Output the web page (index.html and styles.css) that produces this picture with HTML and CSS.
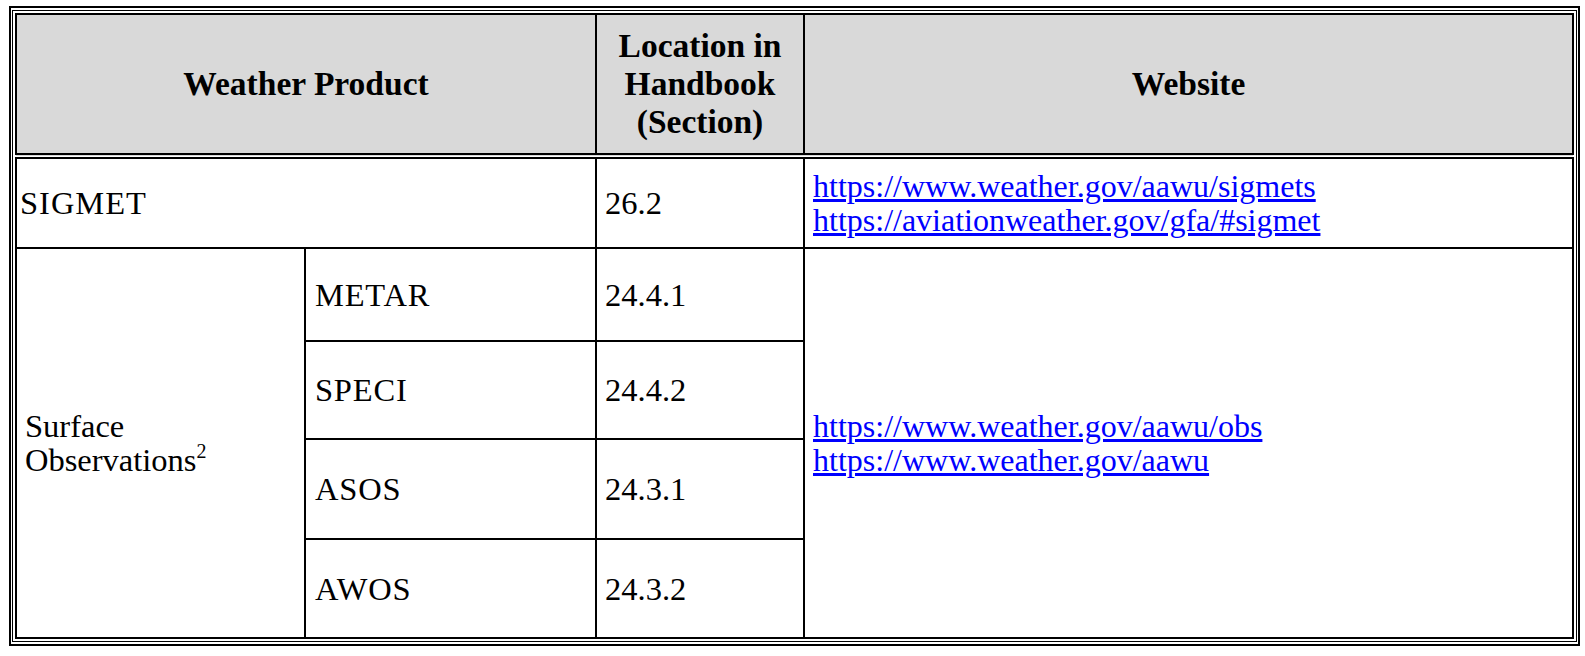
FILE: index.html
```html
<!DOCTYPE html>
<html>
<head>
<meta charset="utf-8">
<link rel="stylesheet" href="styles.css">
</head>
<body>
<div class="frame-outer">
  <div class="frame-inner">
    <table class="wx">
      <colgroup>
        <col class="c1"><col class="c2"><col class="c3"><col class="c4">
      </colgroup>
      <thead>
        <tr class="head-row">
          <th colspan="2">Weather Product</th>
          <th class="hd-loc">Location in<br>Handbook<br>(Section)</th>
          <th>Website</th>
        </tr>
      </thead>
      <tbody>
        <tr class="r-sigmet">
          <td colspan="2" class="first-s">SIGMET</td>
          <td>26.2</td>
          <td class="links"><a href="#">https://www.weather.gov/aawu/sigmets</a><br><a href="#">https://aviationweather.gov/gfa/#sigmet</a></td>
        </tr>
        <tr class="r1">
          <td rowspan="4" class="first-o">Surface<br>Observations<sup>2</sup></td>
          <td class="sub">METAR</td>
          <td>24.4.1</td>
          <td rowspan="4" class="links"><a href="#">https://www.weather.gov/aawu/obs</a><br><a href="#">https://www.weather.gov/aawu</a></td>
        </tr>
        <tr class="r2">
          <td class="sub">SPECI</td>
          <td>24.4.2</td>
        </tr>
        <tr class="r3">
          <td class="sub">ASOS</td>
          <td>24.3.1</td>
        </tr>
        <tr class="r4">
          <td class="sub">AWOS</td>
          <td>24.3.2</td>
        </tr>
      </tbody>
    </table>
  </div>
</div>
</body>
</html>
```
FILE: styles.css
```css
html, body {
  margin: 0;
  padding: 0;
  background: #ffffff;
}
body {
  padding: 6px 0 0 9px;
  font-family: "Liberation Serif", "Times New Roman", serif;
  color: #000;
}
.frame-outer {
  display: inline-block;
  border: 2px solid #000;
  padding: 2px 1px;
}
.frame-inner {
  border: 1px solid #000;
  padding: 2px;
}
.wx {
  border-collapse: collapse;
  table-layout: fixed;
  width: 1557px;
  font-size: 32.5px;
}
.c1 { width: 289px; }
.c2 { width: 291px; }
.c3 { width: 208px; }
.c4 { width: 769px; }
.wx th, .wx td {
  border: 2px solid #000;
  padding: 0 8px;
  vertical-align: middle;
  text-align: left;
  line-height: 34px;
}
.wx th {
  background: #d9d9d9;
  text-align: center;
  font-weight: bold;
  font-size: 33.5px;
  line-height: 38px;
  border-bottom: 6px double #000;
}
.head-row { height: 142px; }
.r-sigmet { height: 92px; }
.r1 { height: 93px; }
.r2 { height: 98px; }
.r3 { height: 100px; }
.r4 { height: 99px; }
.wx td.first-s { padding-left: 3px; letter-spacing: 1px; }
.wx td.first-o { padding-left: 8px; }
.wx td.sub { padding-left: 9px; letter-spacing: 0.8px; }
.wx td.links { font-size: 32px; }
.wx a {
  color: #0000ff;
  text-decoration: underline;
}
.wx sup {
  font-size: 20px;
  line-height: 0;
  vertical-align: 13px;
}
```
